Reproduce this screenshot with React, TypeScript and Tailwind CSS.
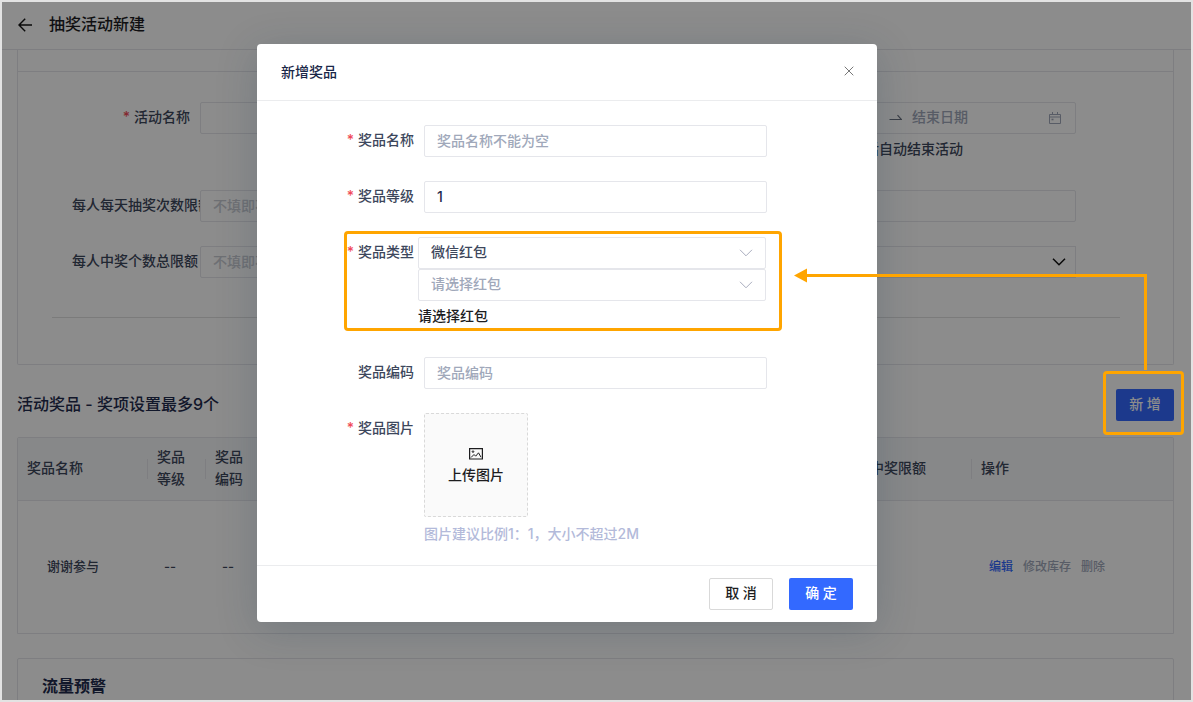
import React from "react";

const inputClass =
  "h-8 w-full rounded-xs border border-[#e5e6eb] bg-white px-3 pb-0.5 text-sm text-[#1f2b4d] outline-none placeholder:text-[#a0a8ba]";

function BackIcon() {
  return (
    <svg width="14" height="14" viewBox="0 0 14 14" fill="none" stroke="#111" strokeWidth="1.4">
      <path d="M14 7H1M7.2 0.8L1 7l6.2 6.2" />
    </svg>
  );
}

function ChevronIcon({ className }: { className: string }) {
  return (
    <svg className={className} viewBox="0 0 14 14" fill="none" stroke="currentColor">
      <path d="M1 3.8l6 6 6-6" />
    </svg>
  );
}

function CalendarIcon() {
  return (
    <svg width="14" height="14" viewBox="0 0 14 14" fill="none" stroke="#a0a8ba">
      <path d="M1.5 3.5h11v9h-11zM1.5 6h11M4.5 1v3M9.5 1v3" />
      <path d="M3.5 8.5h2" strokeWidth="1.6" />
    </svg>
  );
}

function ImageIcon() {
  return (
    <svg width="14" height="14" viewBox="0 0 14 14" fill="none" stroke="#1d1d1f">
      <path d="M0.6 1.6h12.8v10.4H0.6z" strokeWidth="1.2" />
      <path d="M2 10.5l3-3 1.7 1.7 2.8-3.4L12 10.2" />
      <circle cx="4" cy="4.6" r="0.8" />
    </svg>
  );
}

function Required() {
  return <span className="mr-1 text-[#f04b58]">*</span>;
}

function PageField({
  id,
  label,
  required,
  children,
}: {
  id: string;
  label?: string;
  required?: boolean;
  children: React.ReactNode;
}) {
  return (
    <div className="flex items-start">
      <label
        htmlFor={id}
        className={
          required
            ? "flex h-8 w-32 shrink-0 items-center justify-end pr-[10px] pb-0.5 whitespace-nowrap text-[#3d475c]"
            : "flex h-8 w-32 shrink-0 items-center pb-0.5 whitespace-nowrap text-[#3d475c]"
        }
      >
        {required && <Required />}
        {label}
      </label>
      <div className="relative min-w-0 flex-1">{children}</div>
    </div>
  );
}

function ModalField({
  id,
  label,
  required,
  children,
}: {
  id: string;
  label: string;
  required?: boolean;
  children: React.ReactNode;
}) {
  return (
    <div className="flex items-start">
      <label
        htmlFor={id}
        className="flex h-8 w-1/4 shrink-0 items-center justify-end pr-[10px] pb-0.5 text-[#3d475c]"
      >
        {required && <Required />}
        {label}
      </label>
      <div className="w-3/5">{children}</div>
    </div>
  );
}

function ModalSelect({ id, label, text, muted }: { id: string; label: string; text: string; muted?: boolean }) {
  return (
    <div className="relative">
      <select
        id={id}
        aria-label={label}
        className={
          muted
            ? "block h-8 w-full appearance-none rounded-xs border border-[#e5e6eb] bg-white px-3 pb-0.5 text-sm text-[#a0a8ba]"
            : "block h-8 w-full appearance-none rounded-xs border border-[#e5e6eb] bg-white px-3 pb-0.5 text-sm text-[#3d475c]"
        }
      >
        <option>{text}</option>
      </select>
      <ChevronIcon className="pointer-events-none absolute top-[9px] right-[13px] size-[14px] text-[#a9adbe]" />
    </div>
  );
}

function Callout() {
  return (
    <div className="pointer-events-none absolute -top-[18px] -right-[10px] -bottom-[14px] -left-[13px] z-20">
      <div className="h-full rounded-sm border-3 border-[#ffa500]" />
      <svg
        className="absolute right-[37px] bottom-full"
        width="353"
        height="103"
        viewBox="0 0 353 103"
        fill="none"
      >
        <path d="M12 7.5H351.5V102" stroke="#ffa500" strokeWidth="3" />
        <path d="M0 7.5L13 0.5v14z" fill="#ffa500" />
      </svg>
    </div>
  );
}

function PrizeTable() {
  const head = "relative border-b border-[#e5e6eb] px-[9px] pb-0.5 text-left font-medium";
  const bar = "absolute top-1/2 right-0 h-5 w-px -translate-y-1/2 bg-[#e5e6eb]";
  return (
    <div className="mt-4 rounded-t-xs border border-[#e5e6eb]">
      <table className="w-full table-fixed border-separate border-spacing-0 text-[#3d475c]">
        <colgroup>
          <col className="w-[130px]" />
          <col className="w-[58px]" />
          <col className="w-[58px]" />
          <col />
          <col className="w-[139px]" />
          <col className="w-[201px]" />
        </colgroup>
        <thead>
          <tr className="h-[63px] bg-[#f6f7fa]">
            <th className={head}>奖品名称<span className={bar} /></th>
            <th className={head}>奖品等级<span className={bar} /></th>
            <th className={head}>奖品编码<span className={bar} /></th>
            <th className={head} />
            <th className={head}>每日中奖限额<span className={bar} /></th>
            <th className={head}>操作</th>
          </tr>
        </thead>
        <tbody>
          <tr className="h-[132px] text-[13px]">
            <td className="pb-0.5 pl-[29px]">谢谢参与</td>
            <td className="pb-0.5 pl-4">--</td>
            <td className="pb-0.5 pl-4">--</td>
            <td />
            <td />
            <td className="pl-[17px] text-xs">
              <div className="flex gap-[10px]">
                <button className="text-[#3369ff]">编辑</button>
                <button className="text-[#a0a8ba]">修改库存</button>
                <button className="text-[#a0a8ba]">删除</button>
              </div>
            </td>
          </tr>
        </tbody>
      </table>
    </div>
  );
}

function PrizeDialog() {
  return (
    <div
      role="dialog"
      aria-labelledby="dialog-title"
      className="w-[620px] rounded-sm bg-white shadow-[0_8px_40px_0_rgba(30,60,80,0.22)]"
    >
      <div className="flex h-[57px] items-center justify-between border-b border-[#ebecee] px-6">
        <h2 id="dialog-title" className="text-sm text-[#1a2748]">新增奖品</h2>
        <button aria-label="关闭" className="-mr-px pb-0.5">
          <svg width="10" height="10" viewBox="0 0 10 10" fill="none" stroke="#777">
            <path d="M0.7 0.7l8.6 8.6M9.3 0.7L0.7 9.3" />
          </svg>
        </button>
      </div>
      <div className="flex flex-col gap-6 px-6 pt-6 pb-5">
        <ModalField id="prize-name" label="奖品名称" required>
          <input id="prize-name" className={inputClass} placeholder="奖品名称不能为空" />
        </ModalField>
        <ModalField id="prize-level" label="奖品等级" required>
          <input id="prize-level" className={inputClass} defaultValue="1" />
        </ModalField>
        <div className="relative">
          <ModalField id="prize-type" label="奖品类型" required>
            <div className="-ml-1.5 mr-px">
              <ModalSelect id="prize-type" label="奖品类型" text="微信红包" />
              <ModalSelect id="red-packet" label="红包" text="请选择红包" muted />
              <p className="h-8 leading-[30px] text-[#1d1d1f]">请选择红包</p>
            </div>
          </ModalField>
          <div className="pointer-events-none absolute -top-1.5 right-[71px] bottom-[2px] left-[63px] rounded-sm border-3 border-[#ffa500]" />
        </div>
        <ModalField id="prize-code" label="奖品编码">
          <input id="prize-code" className={inputClass} placeholder="奖品编码" />
        </ModalField>
        <ModalField id="prize-image" label="奖品图片" required>
          <button
            id="prize-image"
            className="flex size-[104px] flex-col items-center justify-center rounded-xs border border-dashed border-[#d9d9d9] bg-[#fafafa] pt-[3px] text-[#1d1d1f]"
          >
            <ImageIcon />
            <span className="mt-[3px]">上传图片</span>
          </button>
          <p className="mt-1.5 text-[#b3bada]">图片建议比例1：1，大小不超过2M</p>
        </ModalField>
      </div>
      <div className="flex justify-end gap-4 border-t border-[#ebecee] px-6 py-3">
        <button className="h-8 w-16 rounded-xs border border-[#d9d9d9] pb-0.5 text-[#1d1d1f]">取 消</button>
        <button className="h-8 w-16 rounded-xs bg-[#3369ff] pb-0.5 text-white">确 定</button>
      </div>
    </div>
  );
}

export default function App() {
  return (
    <div className="relative h-screen overflow-hidden border-2 border-[#e3e3e3] bg-white font-['Inter','Noto_Sans_CJK_SC',sans-serif] text-sm leading-[22px] font-medium">
      <header className="flex h-12 items-center gap-[17px] border-b border-[#e5e6eb] px-4 pb-0.5">
        <button aria-label="返回">
          <BackIcon />
        </button>
        <h1 className="pb-0.5 text-base text-[#1d1d1f]">抽奖活动新建</h1>
      </header>

      <main className="pr-[17px] pl-[15px]">
        <section className="rounded-b-xs border-x border-b border-[#e5e6eb]">
          <div className="h-[22px] border-b border-[#e5e6eb]" />
          <div className="grid grid-cols-2 gap-x-[60px] gap-y-6 pt-[30px] pr-[97px] pl-[54px]">
            <PageField id="activity-name" label="活动名称" required>
              <input id="activity-name" className={inputClass} />
            </PageField>
            <PageField id="end-date">
              <div className="flex h-8 items-center rounded-xs border border-[#e5e6eb] bg-white pr-[13px]">
                <input aria-label="开始日期" className="min-w-0 flex-1 outline-none" />
                <svg className="mr-[10px]" width="13" height="12" viewBox="0 0 13 12" fill="none" stroke="#6b7280">
                  <path d="M0.5 7.5h12L8.5 3.2" strokeWidth="1.2" />
                </svg>
                <input
                  id="end-date"
                  aria-label="结束日期"
                  placeholder="结束日期"
                  className="w-[136px] pb-0.5 outline-none placeholder:text-[#a0a8ba]"
                />
                <CalendarIcon />
              </div>
              <p className="h-8 pr-[113px] text-right leading-[30px] text-[#3d475c]">后自动结束活动</p>
            </PageField>
            <PageField id="daily-limit" label="每人每天抽奖次数限额">
              <input
                id="daily-limit"
                className="h-8 w-full rounded-xs border border-[#e5e6eb] bg-white px-3 pb-0.5 placeholder:text-[#c9ccd3]"
                placeholder="不填即不限制"
              />
            </PageField>
            <PageField id="draw-limit">
              <input id="draw-limit" aria-label="抽奖限额" className={inputClass} />
            </PageField>
            <PageField id="win-limit" label="每人中奖个数总限额">
              <input
                id="win-limit"
                className="h-8 w-full rounded-xs border border-[#e5e6eb] bg-white px-3 pb-0.5 placeholder:text-[#c9ccd3]"
                placeholder="不填即不限制"
              />
            </PageField>
            <PageField id="rule">
              <select
                id="rule"
                aria-label="规则"
                className="block h-8 w-full appearance-none border border-[#e5e6eb] bg-white"
              />
              <ChevronIcon className="pointer-events-none absolute top-[9px] right-[10px] size-[14px] stroke-[1.5] text-[#111]" />
            </PageField>
          </div>
          <hr className="mt-[39px] mr-[53px] mb-[46px] ml-[34px] border-[#e0e0e0]" />
        </section>

        <div className="mt-6 flex items-center justify-between">
          <h2 className="pb-0.5 text-base text-[#1f2b4d]">活动奖品 - 奖项设置最多9个</h2>
          <div className="relative">
            <button className="h-8 w-[58px] rounded-xs bg-[#3369ff] pb-0.5 text-white">新 增</button>
            <Callout />
          </div>
        </div>

        <PrizeTable />

        <section className="mt-6 h-24 rounded-t-xs border border-[#e5e6eb] px-6 pt-[15px]">
          <h2 className="text-base font-bold text-[#1f2b4d]">流量预警</h2>
        </section>
      </main>

      <div className="absolute inset-0 z-10 flex items-start justify-center bg-black/45 pt-[42px] pr-[59px]">
        <PrizeDialog />
      </div>
    </div>
  );
}
